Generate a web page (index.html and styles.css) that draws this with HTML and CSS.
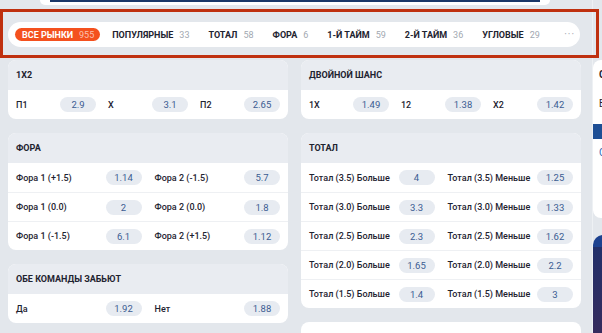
FILE: index.html
```html
<!DOCTYPE html>
<html lang="ru">
<head>
  <meta charset="UTF-8" />
  <meta name="viewport" content="width=device-width, initial-scale=1.0" />
  <title>Рынки</title>
  <link rel="stylesheet" href="styles.css">
</head>
<body>
  <div class="page">
    <main class="markets">
      <div class="promo-tail"></div>

      <nav class="tabs">
        <div class="tab active">Все рынки <span class="count">955</span></div>
        <div class="tab">Популярные <span class="count">33</span></div>
        <div class="tab">Тотал <span class="count">58</span></div>
        <div class="tab">Фора <span class="count">6</span></div>
        <div class="tab">1-й тайм <span class="count">59</span></div>
        <div class="tab">2-й тайм <span class="count">36</span></div>
        <div class="tab">Угловые <span class="count">29</span></div>
        <div class="more">···</div>
      </nav>

      <div class="grid">
        <div class="col">
          <div class="card">
            <div class="card-head">1X2</div>
            <div class="row three">
              <div class="outcome">П1 <span class="odd">2.9</span></div>
              <div class="outcome">X <span class="odd">3.1</span></div>
              <div class="outcome">П2 <span class="odd">2.65</span></div>
            </div>
          </div>

          <div class="card">
            <div class="card-head">Фора</div>
            <div class="row two">
              <div class="outcome">Фора 1 (+1.5) <span class="odd">1.14</span></div>
              <div class="outcome">Фора 2 (-1.5) <span class="odd">5.7</span></div>
            </div>
            <div class="row two">
              <div class="outcome">Фора 1 (0.0) <span class="odd">2</span></div>
              <div class="outcome">Фора 2 (0.0) <span class="odd">1.8</span></div>
            </div>
            <div class="row two">
              <div class="outcome">Фора 1 (-1.5) <span class="odd">6.1</span></div>
              <div class="outcome">Фора 2 (+1.5) <span class="odd">1.12</span></div>
            </div>
          </div>

          <div class="card">
            <div class="card-head">Обе команды забьют</div>
            <div class="row two">
              <div class="outcome">Да <span class="odd">1.92</span></div>
              <div class="outcome">Нет <span class="odd">1.88</span></div>
            </div>
          </div>
        </div>

        <div class="col">
          <div class="card">
            <div class="card-head">Двойной шанс</div>
            <div class="row three">
              <div class="outcome">1X <span class="odd">1.49</span></div>
              <div class="outcome">12 <span class="odd">1.38</span></div>
              <div class="outcome">X2 <span class="odd">1.42</span></div>
            </div>
          </div>

          <div class="card">
            <div class="card-head">Тотал</div>
            <div class="row two">
              <div class="outcome">Тотал (3.5) Больше <span class="odd">4</span></div>
              <div class="outcome">Тотал (3.5) Меньше <span class="odd">1.25</span></div>
            </div>
            <div class="row two">
              <div class="outcome">Тотал (3.0) Больше <span class="odd">3.3</span></div>
              <div class="outcome">Тотал (3.0) Меньше <span class="odd">1.33</span></div>
            </div>
            <div class="row two">
              <div class="outcome">Тотал (2.5) Больше <span class="odd">2.3</span></div>
              <div class="outcome">Тотал (2.5) Меньше <span class="odd">1.62</span></div>
            </div>
            <div class="row two">
              <div class="outcome">Тотал (2.0) Больше <span class="odd">1.65</span></div>
              <div class="outcome">Тотал (2.0) Меньше <span class="odd">2.2</span></div>
            </div>
            <div class="row two">
              <div class="outcome">Тотал (1.5) Больше <span class="odd">1.4</span></div>
              <div class="outcome">Тотал (1.5) Меньше <span class="odd">3</span></div>
            </div>
          </div>

          <div class="card card-next"></div>
        </div>
      </div>
    </main>

    <aside class="side">
      <div class="side-card">
        <div class="side-title">Статистика</div>
        <div class="side-line">Было</div>
        <div class="side-band"></div>
        <div class="side-dot">Открыть</div>
      </div>
      <div class="side-promo"></div>
    </aside>
  </div>

  <div class="highlight"></div>
</body>
</html>
```

FILE: styles.css
```css
body {
  margin: 0;
  width: 602px;
  height: 333px;
  overflow: hidden;
  position: relative;
  background-color: #e3e7ec;
  font-family: Roboto, "Noto Sans", Arial, sans-serif;
  color: #1e2330;
}
.page {
  display: flex;
}
.markets {
  flex: none;
  width: 573px;
  padding-left: 8px;
}
.promo-tail {
  margin-left: 32px;
  width: 510px;
  height: 5px;
  padding: 0 10px;
  box-sizing: border-box;
  background: #fff;
  border-radius: 0 0 8px 8px;
}
.promo-tail::before {
  content: '';
  display: block;
  height: 2px;
  background: #1b3768;
}
.tabs {
  margin-top: 17px;
  width: 572px;
  height: 25px;
  padding: 0 5px 0 7px;
  box-sizing: border-box;
  display: flex;
  align-items: center;
  gap: 5px;
  background: #fff;
  border-radius: 13px;
}
.tab {
  display: flex;
  align-items: center;
  gap: 6px;
  height: 13px;
  padding: 0 7px;
  border-radius: 7px;
  font-size: 9px;
  font-weight: 700;
  text-transform: uppercase;
  white-space: nowrap;
}
.tab .count {
  font-weight: 400;
  color: #a2a8b1;
}
.tab.active {
  padding: 0 6px 0 7px;
  background: #f4511e;
  color: #fff;
}
.tab.active .count {
  color: rgba(255, 255, 255, 0.65);
}
.more {
  margin-left: auto;
  font-size: 10px;
  color: #9fa5ae;
  letter-spacing: 1px;
}
.grid {
  margin-top: 13px;
  display: grid;
  grid-template-columns: 280px 280px;
  column-gap: 13px;
}
.col {
  display: flex;
  flex-direction: column;
  gap: 14px;
}
.card {
  background: #fff;
  border-radius: 8px;
  overflow: hidden;
}
.card-next {
  height: 40px;
}
.card-head {
  height: 30px;
  padding: 0 8px;
  display: flex;
  align-items: center;
  background: #e9ecf1;
  font-size: 9px;
  font-weight: 700;
  text-transform: uppercase;
}
.row {
  height: 29px;
  padding: 0 8px;
  box-sizing: border-box;
  display: grid;
  align-items: center;
  border-top: 1px solid #eef0f3;
}
.card-head + .row {
  border-top: none;
}
.row.three {
  grid-template-columns: repeat(3, 1fr);
  column-gap: 12px;
}
.row.two {
  grid-template-columns: 1fr 1fr;
  column-gap: 13px;
}
.outcome {
  display: flex;
  justify-content: space-between;
  align-items: center;
  font-size: 9px;
  font-weight: 500;
  white-space: nowrap;
}
.odd {
  width: 36px;
  height: 15px;
  display: flex;
  align-items: center;
  justify-content: center;
  border-radius: 8px;
  background: #e7ebf1;
  color: #3b5c91;
  font-size: 9.5px;
  font-weight: 400;
}
.side {
  flex: none;
  width: 200px;
  margin-left: 11px;
  padding-top: 60px;
  border-left: 1px solid #eef1f4;
}
.side-card {
  height: 158px;
  padding-left: 6px;
  background: #fff;
  border-radius: 8px;
  overflow: hidden;
  font-size: 10px;
}
.side-title {
  padding: 9px 0;
  font-weight: 700;
}
.side-line {
  padding: 9px 0;
}
.side-band {
  margin: 6px 0 0 -6px;
  height: 15px;
  background: #1e4f95;
}
.side-dot {
  padding: 8px 0;
  color: #2d66b6;
}
.side-promo {
  margin-top: 17px;
  height: 120px;
  border-radius: 10px 0 0 0;
  background: linear-gradient(to bottom, #1d4290 0 12px, #22306a 12px, #3a2a5a);
}
.highlight {
  position: absolute;
  left: 0;
  top: 9px;
  width: 599px;
  height: 49px;
  box-sizing: border-box;
  border: 3px solid #bf300f;
}
```
